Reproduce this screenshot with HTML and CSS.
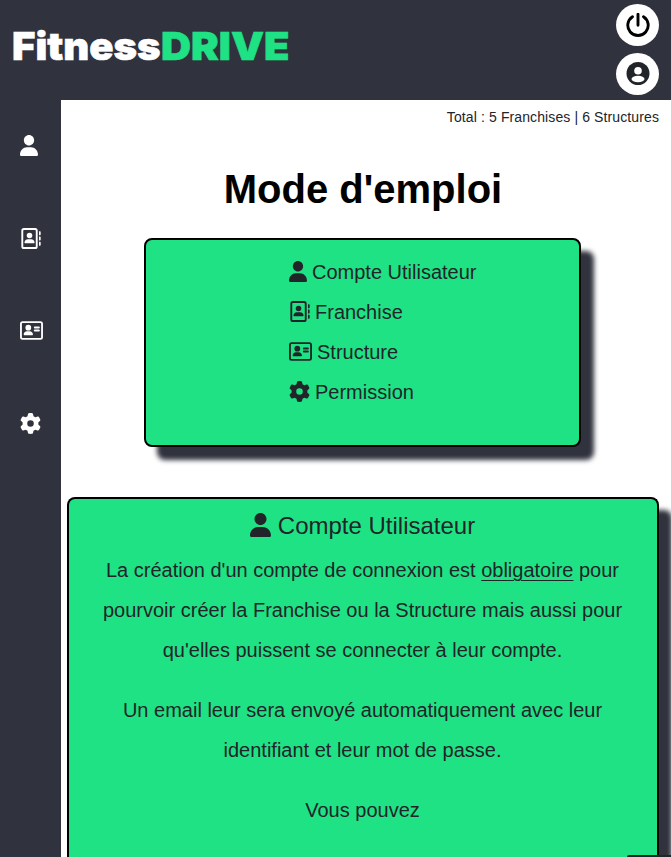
FILE: index.html
```html
<!DOCTYPE html>
<html lang="fr">
<head>
<meta charset="utf-8">
<title>FitnessDRIVE</title>
<link rel="stylesheet" href="styles.css">
</head>
<body>
<svg class="sprite" aria-hidden="true">
  <symbol id="user" viewBox="0 0 448 512" preserveAspectRatio="none"><path d="M224 256c70.7 0 128-57.31 128-128s-57.3-128-128-128C153.3 0 96 57.31 96 128S153.3 256 224 256zM274.7 298H173.3C77.61 298 0 381.6 0 477.3c0 19.14 10 34.67 20 34.67h408C438 512 448 496.5 448 477.3C448 381.6 370.4 298 274.7 298z"/></symbol>
  <symbol id="book" viewBox="0 0 512 512"><rect x="56" y="24" width="352" height="464" rx="40" fill="none" stroke="currentColor" stroke-width="46"/><circle cx="232" cy="184" r="68"/><path d="M192 272h80c48 0 84 36 84 84 0 9-7 16-16 16H124c-9 0-16-7-16-16 0-44 36-84 84-84zM464 80h24c9 0 16 7 16 16v64c0 9-7 16-16 16h-24zM464 208h24c9 0 16 7 16 16v64c0 9-7 16-16 16h-24zM464 336h24c9 0 16 7 16 16v64c0 9-7 16-16 16h-24z"/></symbol>
  <symbol id="card" viewBox="0 0 576 512"><rect x="24" y="48" width="528" height="416" rx="40" fill="none" stroke="currentColor" stroke-width="46"/><circle cx="208" cy="184" r="72"/><path d="M176 272h64c48 0 84 36 84 84 0 9-7 16-16 16H108c-9 0-16-7-16-16 0-44 36-84 84-84z"/><path d="M370 180h104M370 256h104" fill="none" stroke="currentColor" stroke-width="46" stroke-linecap="round"/></symbol>
  <symbol id="gear" viewBox="0 0 512 512"><path d="M495.9 166.6c3.2 8.7 .5 18.4-6.4 24.6l-43.3 39.4c1.1 8.3 1.7 16.8 1.7 25.4s-.6 17.1-1.7 25.4l43.3 39.4c6.9 6.2 9.6 15.9 6.4 24.6c-4.4 11.9-9.7 23.3-15.8 34.3l-4.7 8.1c-6.6 11-14 21.4-22.1 31.2c-5.9 7.2-15.7 9.6-24.5 6.8l-55.7-17.7c-13.4 10.3-28.2 18.9-44 25.4l-12.5 57.1c-2 9.1-9 16.3-18.2 17.8c-13.8 2.3-28 3.5-42.5 3.5s-28.7-1.2-42.5-3.5c-9.2-1.5-16.2-8.7-18.2-17.8l-12.5-57.1c-15.8-6.5-30.6-15.1-44-25.4L83.1 425.9c-8.8 2.8-18.6 .3-24.5-6.8c-8.1-9.8-15.5-20.2-22.1-31.2l-4.7-8.1c-6.1-11-11.4-22.4-15.8-34.3c-3.2-8.7-.5-18.4 6.4-24.6l43.3-39.4C64.6 273.1 64 264.6 64 256s.6-17.1 1.7-25.4L22.4 191.2c-6.9-6.2-9.6-15.9-6.4-24.6c4.4-11.9 9.7-23.3 15.8-34.3l4.7-8.1c6.6-11 14-21.4 22.1-31.2c5.9-7.2 15.7-9.6 24.5-6.8l55.7 17.7c13.4-10.3 28.2-18.9 44-25.4l12.5-57.1c2-9.1 9-16.3 18.2-17.8C227.3 1.2 241.5 0 256 0s28.7 1.2 42.5 3.5c9.2 1.5 16.2 8.7 18.2 17.8l12.5 57.1c15.8 6.5 30.6 15.1 44 25.4l55.7-17.7c8.8-2.8 18.6-.3 24.5 6.8c8.1 9.8 15.5 20.2 22.1 31.2l4.7 8.1c6.1 11 11.4 22.4 15.8 34.3zM256 336a80 80 0 1 0 0-160 80 80 0 1 0 0 160z"/></symbol>
</svg>
<header class="topbar">
  <div class="logo"><span class="logo-a">Fitness</span><span class="logo-b">DRIVE</span></div>
  <div class="actions">
    <a class="round power"><svg viewBox="0 0 24 24"><path d="M12 1.200v11M6.500 3.700a10.200 10.200 0 1 0 11 0" fill="none" stroke="currentColor" stroke-width="2.900" stroke-linecap="round"/></svg></a>
    <a class="round account"><svg viewBox="0 0 24 24"><circle cx="12" cy="11.500" r="11.500"/><circle cx="12" cy="8.800" r="3.800" fill="#fff"/><ellipse cx="12" cy="17" rx="6.500" ry="3.200" fill="#fff"/></svg></a>
  </div>
</header>
<div class="layout">
  <nav class="side">
    <a><svg class="w-user"><use href="#user"/></svg></a>
    <a><svg class="w-book"><use href="#book"/></svg></a>
    <a><svg class="w-card"><use href="#card"/></svg></a>
    <a><svg class="w-gear"><use href="#gear"/></svg></a>
  </nav>
  <main>
    <p class="total">Total : 5 Franchises | 6 Structures</p>
    <h1>Mode d'emploi</h1>
    <section class="panel summary">
      <ul>
        <li><svg class="w-user"><use href="#user"/></svg>Compte Utilisateur</li>
        <li><svg class="w-book"><use href="#book"/></svg>Franchise</li>
        <li><svg class="w-card"><use href="#card"/></svg>Structure</li>
        <li><svg class="w-gear"><use href="#gear"/></svg>Permission</li>
      </ul>
    </section>
    <section class="panel guide">
      <h2><svg><use href="#user"/></svg>Compte Utilisateur</h2>
      <p>La création d'un compte de connexion est <u>obligatoire</u> pour pourvoir créer la Franchise ou la Structure mais aussi pour qu'elles puissent se connecter à leur compte.</p>
      <p>Un email leur sera envoyé automatiquement avec leur identifiant et leur mot de passe.</p>
      <p>Vous pouvez</p>
    </section>
  </main>
</div>
<div class="corner"></div>
</body>
</html>
```
FILE: styles.css
```css
* { box-sizing: border-box; }
body {
  margin: 0;
  height: 857px;
  overflow: hidden;
  background: #fff;
  color: #212529;
  font-family: "Liberation Sans", Arial, sans-serif;
}
svg { fill: currentColor; flex: none; }
.sprite { display: none; }
.topbar {
  display: flex;
  justify-content: space-between;
  height: 100px;
  padding: 4px 12px 0 12px;
  background: #30323d;
}
.logo {
  display: flex;
  padding-top: 18px;
  font: 900 38.5px/48px Inter, "Arial Black", sans-serif;
  -webkit-text-stroke: 0.6px currentColor;
}
.logo span { transform-origin: 0 50%; }
.logo-a { width: 149px; color: #fff; transform: scaleX(1.04); }
.logo-b { color: #1fe285; transform: scaleX(1.08); }
.actions { display: flex; flex-direction: column; gap: 7px; }
.round {
  display: flex;
  align-items: center;
  justify-content: center;
  width: 43px;
  height: 42px;
  border-radius: 50%;
  background: #fff;
}
.round svg { width: 24px; height: 24px; }
.round.power { color: #000; }
.account { color: #212529; }
.layout { display: flex; height: 757px; overflow: hidden; }
.side {
  flex: none;
  width: 61px;
  padding: 35px 0 0 20px;
  background: #30323d;
  color: #fff;
}
.side a { display: flex; height: 92.5px; }
.w-user { width: 18px; height: 21px; }
.w-book { width: 21px; height: 21px; }
.w-card { width: 23px; height: 21px; }
.w-gear { width: 21px; height: 21px; }
main { flex: 1; min-width: 0; padding: 0 12px 0 6px; }
.total { margin: 9px 0 0; font-size: 14px; line-height: 17px; letter-spacing: 0.11px; text-align: right; }
h1 { margin: 39px 0 25px; color: #000; font-size: 40px; line-height: 48px; text-align: center; }
.panel {
  border: 2px solid #000;
  border-radius: 8px;
  background: #1fe285;
  box-shadow: 13px 13px 5px #30323d;
  font-size: 20px;
  line-height: 40px;
}
.summary { width: 437px; height: 209px; margin: 0 0 50px 77px; padding: 12px 0 0 142.5px; }
.summary ul { margin: 0; padding: 0; list-style: none; }
.summary li { display: flex; align-items: center; gap: 5.5px; height: 40px; }
.summary svg { margin-top: -1px; }
.guide {
  height: 360px;
  padding: 12px 30.5px 0 29.5px;
  border-bottom: 0;
  border-radius: 8px 8px 0 0;
  text-align: center;
}
.guide h2 {
  display: flex;
  align-items: center;
  justify-content: center;
  gap: 7px;
  margin: 0 0 9px;
  font-size: 24px;
  font-weight: 400;
  line-height: 30px;
}
.guide h2 svg { width: 21px; height: 24px; margin-top: -2px; }
.guide p { margin: 0 0 20px; }
.guide u { text-underline-offset: 3px; text-decoration-thickness: 1px; }
.corner {
  position: fixed;
  right: 0;
  bottom: 0;
  width: 44px;
  height: 2px;
  border-radius: 3px 0 0 0;
  background: #212529;
}
```
